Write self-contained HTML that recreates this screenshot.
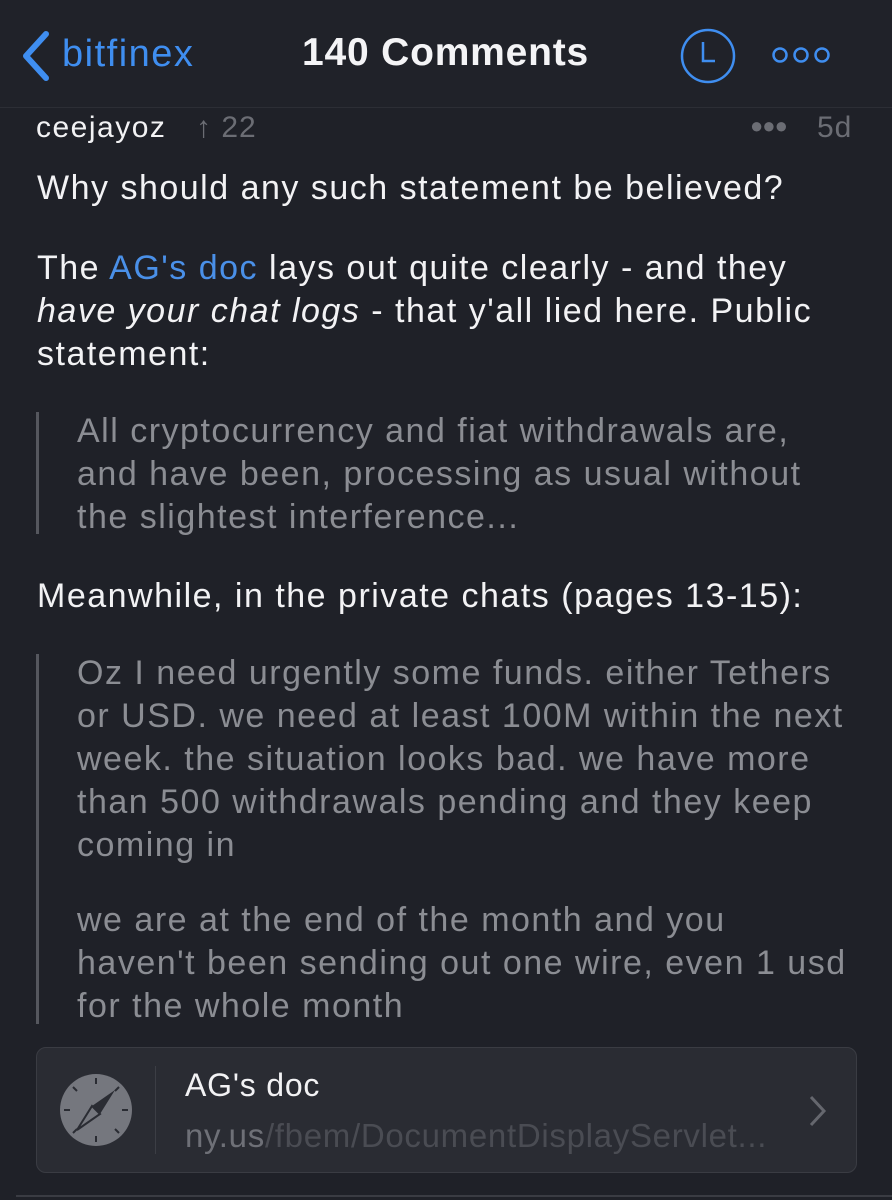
<!DOCTYPE html>
<html><head><meta charset="utf-8"><style>
*{margin:0;padding:0;box-sizing:border-box}
html,body{width:892px;height:1200px;overflow:hidden;background:#1f2128;font-family:"Liberation Sans",sans-serif;color:#f2f2f4}
.abs{position:absolute;white-space:nowrap}
.t{font-size:34px;letter-spacing:1.5px;line-height:43px;position:absolute;left:37px;white-space:nowrap}
.q{font-size:34px;letter-spacing:1.5px;line-height:43px;position:absolute;left:77px;white-space:nowrap;color:#8b8d93}
.bar{position:absolute;left:36px;width:3px;background:#55575e}
a{color:#4a90e8;text-decoration:none}
</style></head><body>
<div class="abs" style="left:0;top:0;width:892px;height:108px;background:#202229;border-bottom:1px solid #2c2e35"></div>
<svg class="abs" style="left:18px;top:30px" width="34" height="52"><path d="M28 4 L8 26 L28 48" stroke="#3f8ef0" stroke-width="6" fill="none" stroke-linecap="round" stroke-linejoin="round"/></svg>
<div class="abs" style="left:62px;top:33px;font-size:38px;letter-spacing:1.5px;color:#3f8ef0">bitfinex</div>
<div class="abs" style="left:302px;top:31px;font-size:39px;letter-spacing:0.8px;font-weight:bold;color:#f4f4f6">140 Comments</div>
<svg class="abs" style="left:678px;top:26px" width="60" height="60"><circle cx="30" cy="30" r="26" stroke="#3f8ef0" stroke-width="2.5" fill="none"/><path d="M25 16 V35 H37" stroke="#3f8ef0" stroke-width="2.5" fill="none"/></svg>
<svg class="abs" style="left:770px;top:44px" width="62" height="22"><g stroke="#3f8ef0" stroke-width="2.5" fill="none"><circle cx="10" cy="11" r="6.5"/><circle cx="31" cy="11" r="6.5"/><circle cx="52" cy="11" r="6.5"/></g></svg>
<div class="abs" style="left:36px;top:111px;font-size:30px;letter-spacing:1.5px;color:#f2f2f4">ceejayoz</div>
<div class="abs" style="left:196px;top:111px;font-size:30px;letter-spacing:1px;color:#6b6d74">↑ 22</div>
<div class="abs" style="left:750px;top:113px;font-size:22px;color:#6b6d74;letter-spacing:-1px">●●●</div>
<div class="abs" style="left:817px;top:111px;font-size:30px;letter-spacing:1px;color:#6b6d74">5d</div>
<div class="t" style="top:167px">Why should any such statement be believed?</div>
<div class="t" style="top:247px">The <a>AG's doc</a> lays out quite clearly - and they</div>
<div class="t" style="top:290px"><i>have your chat logs</i> - that y'all lied here. Public</div>
<div class="t" style="top:333px">statement:</div>
<div class="bar" style="top:412px;height:122px"></div>
<div class="q" style="top:410px">All cryptocurrency and fiat withdrawals are,</div>
<div class="q" style="top:453px">and have been, processing as usual without</div>
<div class="q" style="top:496px">the slightest interference...</div>
<div class="t" style="top:575px">Meanwhile, in the private chats (pages 13-15):</div>
<div class="bar" style="top:654px;height:370px"></div>
<div class="q" style="top:652px">Oz I need urgently some funds. either Tethers</div>
<div class="q" style="top:695px">or USD. we need at least 100M within the next</div>
<div class="q" style="top:738px">week. the situation looks bad. we have more</div>
<div class="q" style="top:781px">than 500 withdrawals pending and they keep</div>
<div class="q" style="top:824px">coming in</div>
<div class="q" style="top:899px">we are at the end of the month and you</div>
<div class="q" style="top:942px">haven't been sending out one wire, even 1 usd</div>
<div class="q" style="top:985px">for the whole month</div>
<div class="abs" style="left:36px;top:1047px;width:821px;height:126px;background:#2a2c33;border:1px solid #3a3c43;border-radius:10px"></div>
<svg class="abs" style="left:58px;top:1072px" width="76" height="76"><circle cx="38" cy="38" r="36" fill="#75777e"/><g stroke="#2a2c33" stroke-width="2"><path d="M38 6v6M38 64v6M6 38h6M64 38h6M15 15l4 4M57 57l4 4M61 15l-4 4M15 61l4-4"/></g><path d="M57 18 L42 42 L34 34 Z" fill="#2a2c33"/><path d="M19 58 L34 34 L42 42 Z" fill="none" stroke="#2a2c33" stroke-width="2"/></svg>
<div class="abs" style="left:155px;top:1066px;width:1px;height:88px;background:#3c3e45"></div>
<div class="abs" style="left:185px;top:1067px;font-size:32px;letter-spacing:0.8px;color:#f2f2f4">AG's doc</div>
<div class="abs" style="left:185px;top:1117px;font-size:33px;letter-spacing:0.7px;color:#6e7077">ny.us<span style="color:#4a4c53">/fbem/DocumentDisplayServlet...</span></div>
<svg class="abs" style="left:806px;top:1094px" width="24" height="34"><path d="M5 3 L18 17 L5 31" stroke="#65676e" stroke-width="3" fill="none"/></svg>
<div class="abs" style="left:16px;top:1195px;width:876px;height:2px;background:#3a3c43"></div>
</body></html>
